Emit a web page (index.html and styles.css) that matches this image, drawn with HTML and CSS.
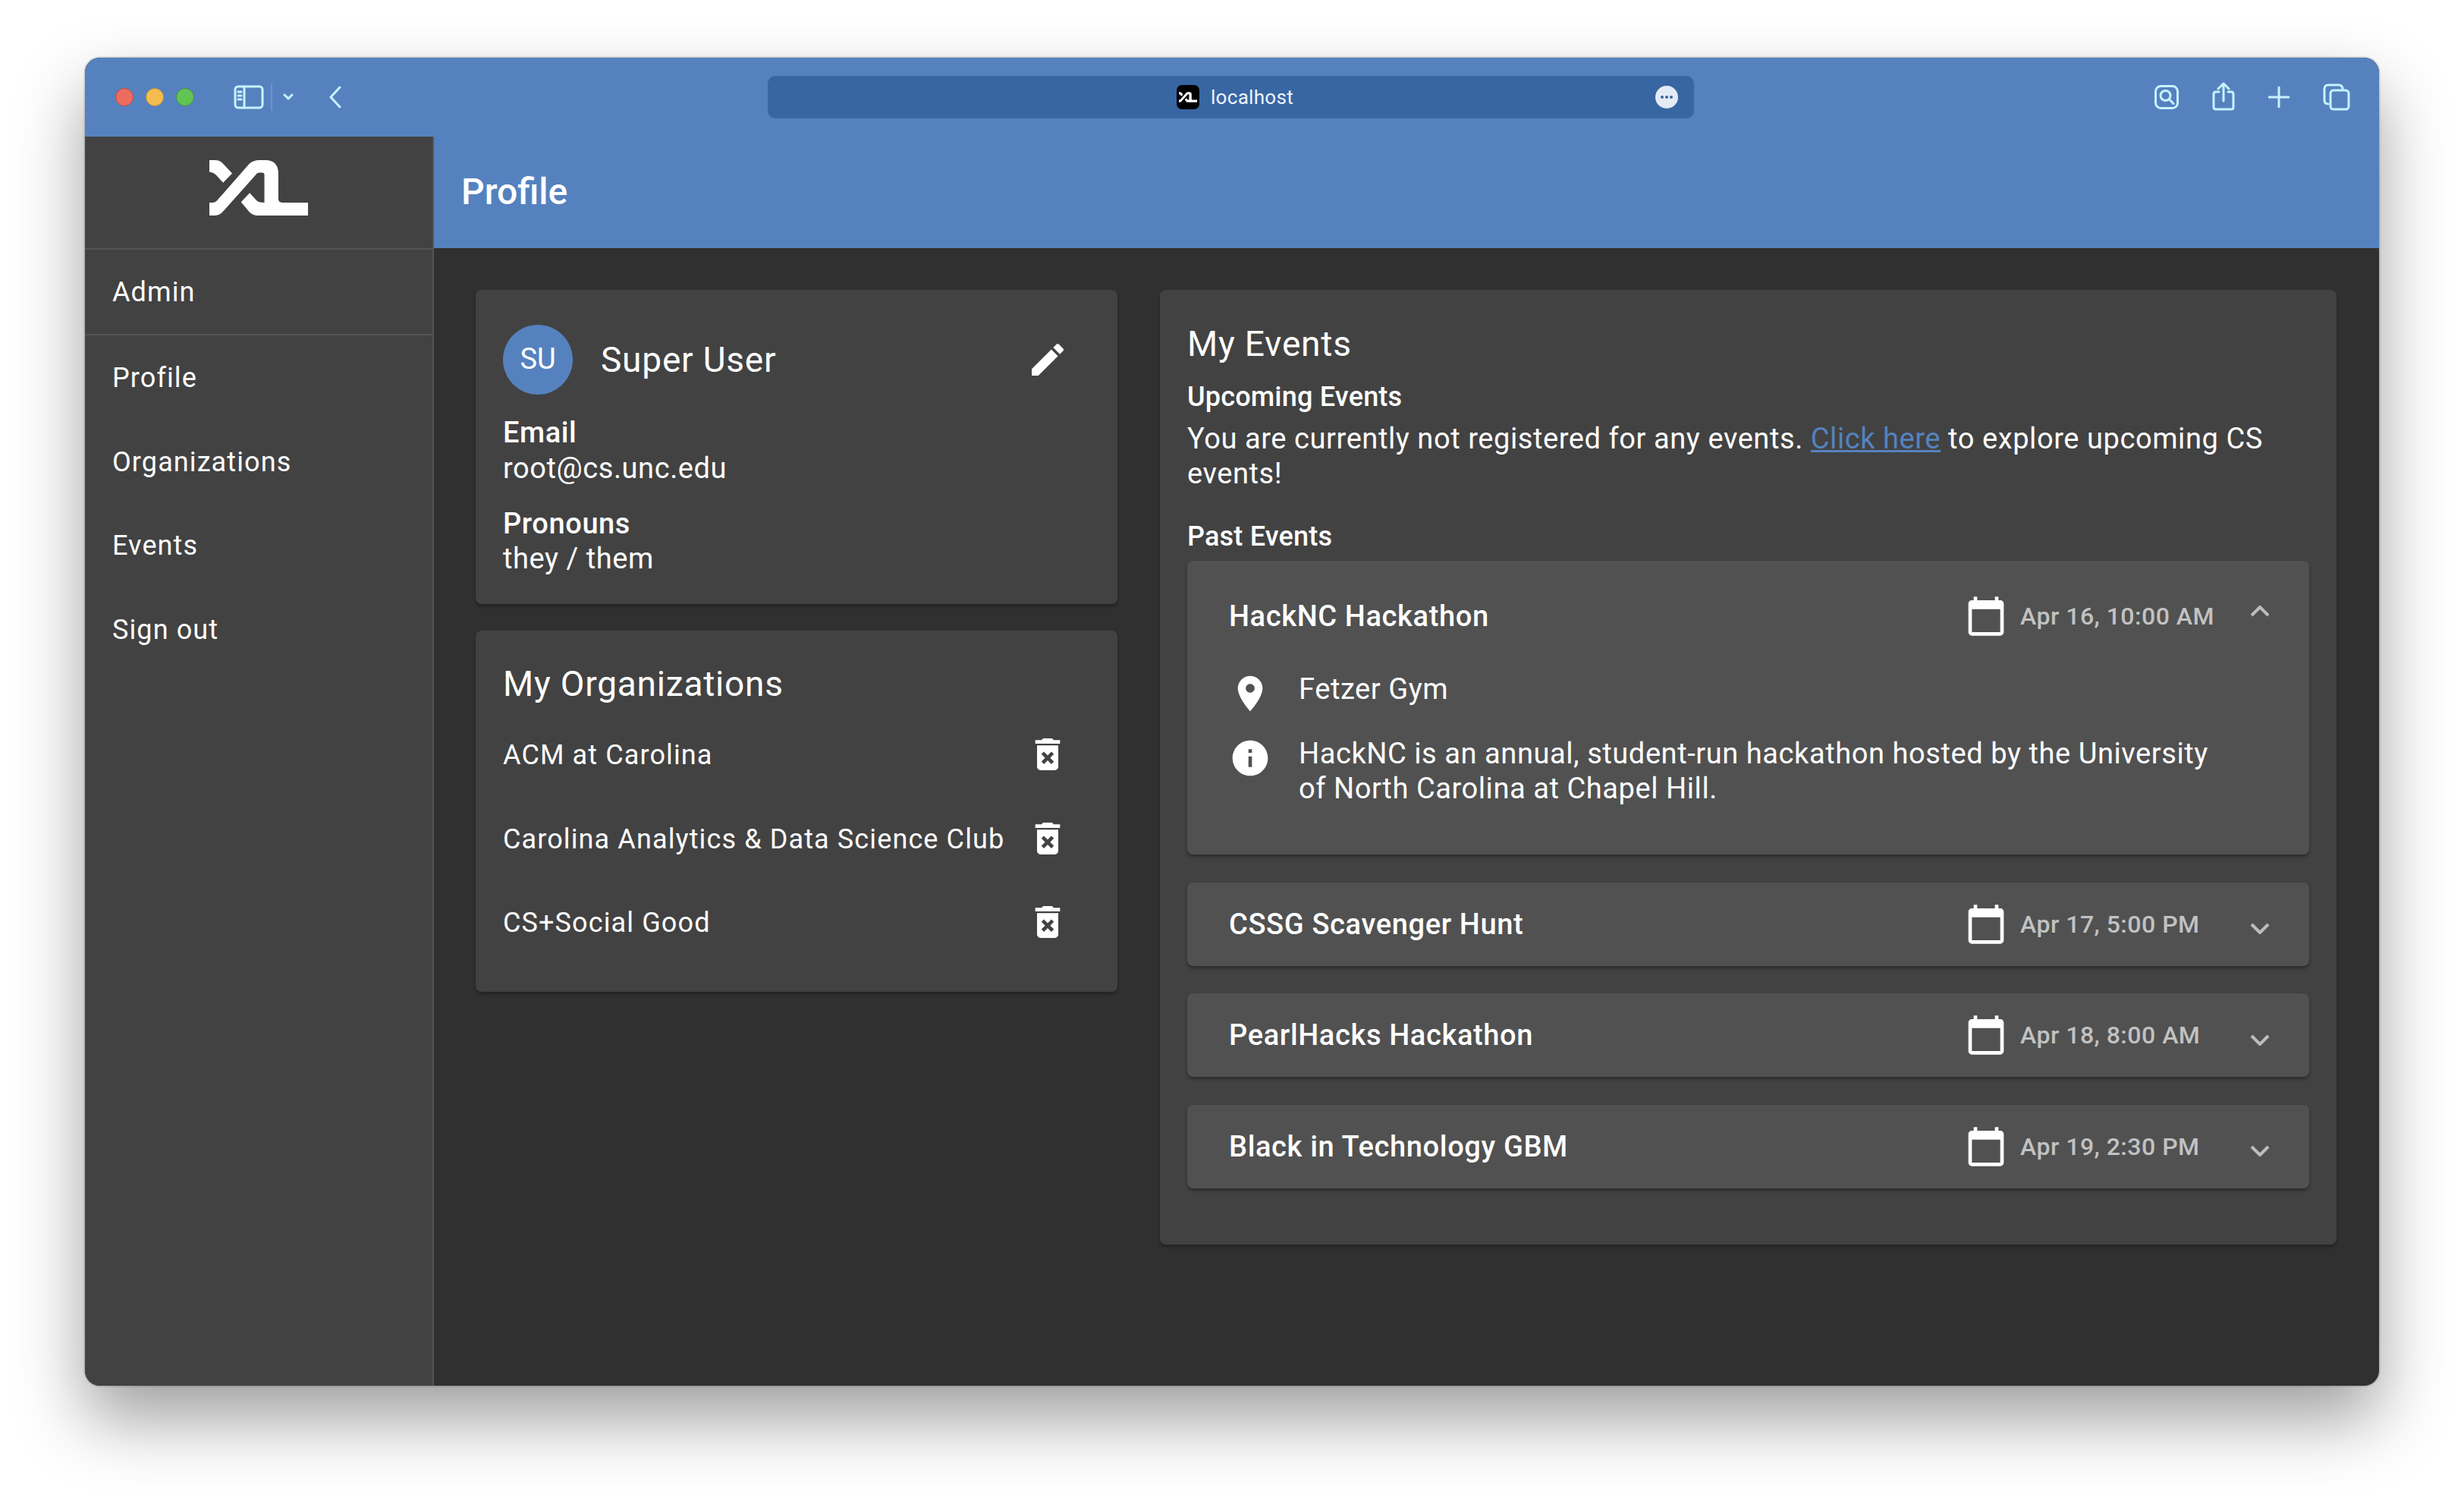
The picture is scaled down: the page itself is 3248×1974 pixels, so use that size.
FILE: index.html
```html
<!DOCTYPE html>
<html lang="en">
<head>
    <meta charset="UTF-8">
    <title>Profile</title>
    <link rel="stylesheet" href="styles.css">
</head>
<body>
    <svg class="defs" width="0" height="0">
        <symbol id="xl" viewBox="48 33 389 218">
            <path d="M48 200H62C70 200 76 196 82 188L205 48C216 37 230 33 245 33H270C302 33 320 52 320 85V185C320 195 325 200 335 200H437V251H240C222 251 210 244 200 230L173 198L207 162L235 193C243 199 252 200 265 200V90C265 84 261 82 255 82H245C238 82 234 87 230 92L105 232C93 246 84 251 70 251H48Z"/>
            <path d="M48 33H70C83 33 92 37 100 45L138 85L102 122L75 92C66 84 58 80 48 80Z"/>
        </symbol>
        <symbol id="calendar" viewBox="0 0 24 24">
            <path d="M20 3h-1V1h-2v2H7V1H5v2H4c-1.1 0-2 .9-2 2v16c0 1.1.9 2 2 2h16c1.1 0 2-.9 2-2V5c0-1.1-.9-2-2-2zm0 18H4V8h16v13z"/>
        </symbol>
        <symbol id="trash" viewBox="0 0 24 24">
            <path d="M6 19c0 1.1.9 2 2 2h8c1.1 0 2-.9 2-2V7H6v12zm2.46-7.12l1.41-1.41L12 12.59l2.12-2.12 1.41 1.41L13.41 14l2.12 2.12-1.41 1.41L12 15.41l-2.12 2.12-1.41-1.41L10.59 14l-2.13-2.12zM15.5 4l-1-1h-5l-1 1H5v2h14V4z"/>
        </symbol>
    </svg>

    <div class="window">
        <div class="titlebar">
            <div class="toolbar-left">
                <span class="light red"></span>
                <span class="light yellow"></span>
                <span class="light green"></span>
                <svg class="tool sidebar-toggle" width="40" height="32" viewBox="0 0 40 32">
                    <rect x="2" y="2" width="36" height="28" rx="4"/>
                    <path d="M14 2V30M6 9H10M6 14H10M6 19H10"/>
                </svg>
                <span class="tool-sep"></span>
                <svg class="tool toggle-arrow" width="14" height="10" viewBox="0 0 14 10">
                    <path d="M2 2L7 7L12 2"/>
                </svg>
                <svg class="tool back-arrow" width="18" height="30" viewBox="0 0 18 30">
                    <path d="M15 2L3 15L15 28"/>
                </svg>
            </div>
            <div class="urlbar">
                <span class="favicon"><svg width="24" height="14"><use href="#xl"/></svg></span>
                <span class="url-text">localhost</span>
                <span class="url-more"><i></i><i></i><i></i></span>
            </div>
            <div class="toolbar-right">
                <svg class="tool" width="32" height="32" viewBox="0 0 32 32">
                    <rect x="1.5" y="1.5" width="29" height="29" rx="7"/>
                    <circle cx="14.5" cy="14" r="6.5"/>
                    <path d="M19.5 19L25 24.5"/>
                </svg>
                <svg class="tool share-icon" width="30" height="38" viewBox="0 0 30 38">
                    <path d="M9 13H5C3 13 2 14 2 16V33C2 35 3 36 5 36H25C27 36 28 35 28 33V16C28 14 27 13 25 13H21"/>
                    <path d="M15 25V3M8 9L15 2L22 9"/>
                </svg>
                <svg class="tool" width="28" height="28" viewBox="0 0 28 28">
                    <path d="M14 1V27M1 14H27"/>
                </svg>
                <svg class="tool" width="36" height="36" viewBox="0 0 36 36">
                    <path d="M7 27C3 27 2 25 2 22V7C2 4 4 2 7 2H21C24 2 26 4 26 8"/>
                    <rect x="10" y="9" width="24" height="25" rx="4"/>
                </svg>
            </div>
        </div>

        <div class="app">
            <aside class="sidebar">
                <div class="brand"><svg width="130" height="73"><use href="#xl"/></svg></div>
                <a class="nav-item nav-admin">Admin</a>
                <a class="nav-item">Profile</a>
                <a class="nav-item">Organizations</a>
                <a class="nav-item">Events</a>
                <a class="nav-item">Sign out</a>
            </aside>

            <div class="main">
                <header class="page-header">Profile</header>
                <div class="content">
                    <div class="left-col">
                        <section class="card profile-card">
                            <div class="profile-top">
                                <span class="avatar">SU</span>
                                <span class="profile-name">Super User</span>
                                <svg class="icon edit-icon" viewBox="0 0 24 24">
                                    <path d="M3 17.25V21h3.75L17.81 9.94l-3.75-3.75L3 17.25zM20.71 7.04c.39-.39.39-1.02 0-1.41l-2.34-2.34c-.39-.39-1.02-.39-1.41 0l-1.83 1.83 3.75 3.75 1.83-1.83z"/>
                                </svg>
                            </div>
                            <div class="field">
                                <strong>Email</strong>
                                <span>root@cs.unc.edu</span>
                            </div>
                            <div class="field">
                                <strong>Pronouns</strong>
                                <span>they / them</span>
                            </div>
                        </section>

                        <section class="card orgs-card">
                            <h2 class="card-title">My Organizations</h2>
                            <div class="org-row">
                                <span>ACM at Carolina</span>
                                <svg class="icon"><use href="#trash"/></svg>
                            </div>
                            <div class="org-row">
                                <span>Carolina Analytics &amp; Data Science Club</span>
                                <svg class="icon"><use href="#trash"/></svg>
                            </div>
                            <div class="org-row">
                                <span>CS+Social Good</span>
                                <svg class="icon"><use href="#trash"/></svg>
                            </div>
                        </section>
                    </div>

                    <section class="card events-card">
                        <h2 class="card-title">My Events</h2>
                        <h3 class="sub-title upcoming">Upcoming Events</h3>
                        <p class="events-note">You are currently not registered for any events. <a class="link">Click here</a> to explore upcoming CS events!</p>
                        <h3 class="sub-title past">Past Events</h3>

                        <div class="panel open">
                            <div class="panel-head">
                                <span class="panel-title">HackNC Hackathon</span>
                                <svg class="icon"><use href="#calendar"/></svg>
                                <span class="panel-date">Apr 16, 10:00 AM</span>
                                <svg class="chevron" width="26" height="15" viewBox="0 0 26 15"><path d="M2 13L13 2L24 13"/></svg>
                            </div>
                            <div class="panel-body">
                                <div class="detail-row">
                                    <svg class="icon" viewBox="0 0 24 24"><path d="M12 2C8.13 2 5 5.13 5 9c0 5.25 7 13 7 13s7-7.75 7-13c0-3.87-3.13-7-7-7zm0 9.5c-1.38 0-2.5-1.12-2.5-2.5s1.12-2.5 2.5-2.5 2.5 1.12 2.5 2.5-1.12 2.5-2.5 2.5z"/></svg>
                                    <span>Fetzer Gym</span>
                                </div>
                                <div class="detail-row">
                                    <svg class="icon" viewBox="0 0 24 24"><path d="M12 2C6.48 2 2 6.48 2 12s4.48 10 10 10 10-4.48 10-10S17.52 2 12 2zm1 15h-2v-6h2v6zm0-8h-2V7h2v2z"/></svg>
                                    <span>HackNC is an annual, student-run hackathon hosted by the University of North Carolina at Chapel Hill.</span>
                                </div>
                            </div>
                        </div>

                        <div class="panel">
                            <div class="panel-head">
                                <span class="panel-title">CSSG Scavenger Hunt</span>
                                <svg class="icon"><use href="#calendar"/></svg>
                                <span class="panel-date">Apr 17, 5:00 PM</span>
                                <svg class="chevron" width="26" height="15" viewBox="0 0 26 15"><path d="M2 2L13 13L24 2"/></svg>
                            </div>
                        </div>

                        <div class="panel">
                            <div class="panel-head">
                                <span class="panel-title">PearlHacks Hackathon</span>
                                <svg class="icon"><use href="#calendar"/></svg>
                                <span class="panel-date">Apr 18, 8:00 AM</span>
                                <svg class="chevron" width="26" height="15" viewBox="0 0 26 15"><path d="M2 2L13 13L24 2"/></svg>
                            </div>
                        </div>

                        <div class="panel">
                            <div class="panel-head">
                                <span class="panel-title">Black in Technology GBM</span>
                                <svg class="icon"><use href="#calendar"/></svg>
                                <span class="panel-date">Apr 19, 2:30 PM</span>
                                <svg class="chevron" width="26" height="15" viewBox="0 0 26 15"><path d="M2 2L13 13L24 2"/></svg>
                            </div>
                        </div>
                    </section>
                </div>
            </div>
        </div>
    </div>
</body>
</html>
```

FILE: styles.css
```css
* {
    margin: 0;
    padding: 0;
    box-sizing: border-box;
}

body {
    width: 3248px;
    height: 1974px;
    padding: 76px 0 0 112px;
    overflow: hidden;
    background: #fff;
    color: #fff;
    font-family: Roboto, "Liberation Sans", sans-serif;
    font-size: 38px;
    line-height: 46px;
    letter-spacing: 0.58px;
}

.defs {
    position: absolute;
}

svg {
    fill: #fff;
    display: block;
}

.window {
    width: 3024px;
    height: 1750px;
    border-radius: 20px;
    overflow: hidden;
    display: flex;
    flex-direction: column;
    background: #303030;
    box-shadow: 0 44px 90px rgba(0, 0, 0, 0.38), 0 0 3px rgba(0, 0, 0, 0.45);
}

/* browser chrome */
.titlebar {
    height: 104px;
    flex: none;
    display: flex;
    align-items: flex-start;
    background: #5582bf;
}

.toolbar-left {
    width: 900px;
    height: 104px;
    padding-left: 40px;
    display: flex;
    align-items: center;
}

.light {
    width: 24px;
    height: 24px;
    border-radius: 50%;
    margin-right: 16px;
}

.red {
    background: #ee6b5f;
    border: 1px solid #b2514b;
}

.yellow {
    background: #f5bd4f;
    border: 1px solid #b98f3d;
}

.green {
    background: #61c454;
    border: 1px solid #4a8f45;
}

.tool {
    fill: none;
    stroke: #c9f1ff;
    stroke-width: 3;
    stroke-linecap: round;
    stroke-linejoin: round;
}

.sidebar-toggle {
    margin-left: 36px;
}

.tool-sep {
    width: 2px;
    height: 36px;
    margin: 0 14px 0 9px;
    background: #6b93ca;
}

.back-arrow {
    margin-left: 46px;
}

.urlbar {
    width: 1221px;
    height: 56px;
    margin-top: 24px;
    border-radius: 10px;
    background: #3866a3;
    display: flex;
    align-items: center;
    padding-left: 539px;
}

.favicon {
    width: 30px;
    height: 32px;
    border-radius: 7px;
    background: #000;
    display: flex;
    align-items: center;
    justify-content: center;
}

.url-text {
    margin-left: 15px;
    font-size: 26px;
    letter-spacing: 0.3px;
    color: #eef3fa;
}

.url-more {
    width: 30px;
    height: 30px;
    margin-left: 477px;
    border-radius: 50%;
    background: #e4ebf5;
    display: flex;
    align-items: center;
    justify-content: center;
    gap: 2px;
}

.url-more i {
    width: 4px;
    height: 4px;
    border-radius: 50%;
    background: #3866a3;
}

.toolbar-right {
    flex: 1;
    height: 104px;
    padding: 0 38px 0 0;
    display: flex;
    align-items: center;
    justify-content: flex-end;
    gap: 44px;
}

.share-icon {
    margin-top: -2px;
}

/* app shell */
.app {
    flex: 1;
    display: flex;
    min-height: 0;
}

.sidebar {
    width: 460px;
    flex: none;
    background: #424242;
    border-right: 2px solid #545454;
}

.brand {
    height: 149px;
    border-bottom: 2px solid #545454;
    display: flex;
    align-items: center;
    justify-content: center;
    padding-bottom: 12px;
}

.nav-item {
    display: block;
    height: 110.5px;
    padding-left: 36px;
    font-size: 36px;
    line-height: 112px;
    letter-spacing: 1.1px;
}

.nav-admin {
    height: 113px;
    border-bottom: 2px solid #545454;
}

.main {
    flex: 1;
    min-width: 0;
}

.page-header {
    height: 147px;
    padding-left: 36px;
    background: #5582bf;
    font-size: 48px;
    font-weight: 500;
    line-height: 146px;
    letter-spacing: 0;
}

.content {
    padding: 55px 55px 0;
    display: flex;
    align-items: flex-start;
    gap: 56px;
}

.left-col {
    width: 846px;
    flex: none;
    display: flex;
    flex-direction: column;
    gap: 35px;
}

.card {
    padding: 0 36px;
    background: #424242;
    border-radius: 8px;
    box-shadow: 0 3px 4px rgba(0, 0, 0, 0.3);
}

.icon {
    width: 56px;
    height: 56px;
    flex: none;
}

.card-title {
    font-size: 46px;
    font-weight: 400;
    line-height: 60px;
    letter-spacing: 0.8px;
}

/* profile */
.profile-card {
    padding-top: 46px;
    padding-bottom: 35px;
}

.profile-top {
    display: flex;
    align-items: center;
    height: 92px;
    margin-bottom: 27px;
}

.avatar {
    width: 92px;
    height: 92px;
    border-radius: 50%;
    background: #5582bf;
    text-align: center;
    line-height: 90px;
    letter-spacing: 0;
}

.profile-name {
    flex: 1;
    margin-left: 37px;
    font-size: 46px;
    letter-spacing: 0.8px;
}

.edit-icon {
    margin-right: 28px;
}

.field {
    display: flex;
    flex-direction: column;
    margin-bottom: 26px;
    line-height: 47px;
}

.field:last-child {
    margin-bottom: 0;
    padding-bottom: 2px;
    line-height: 46px;
}

.field strong {
    font-weight: 500;
}

/* organizations */
.orgs-card {
    padding-top: 40px;
    padding-bottom: 36px;
}

.orgs-card .card-title {
    margin-bottom: 8px;
}

.org-row {
    height: 110.5px;
    padding-right: 28px;
    display: flex;
    align-items: center;
    justify-content: space-between;
    font-size: 36px;
    letter-spacing: 1.12px;
}

.org-row span {
    padding-top: 2px;
}

/* events */
.events-card {
    width: 1551px;
    flex: none;
    padding-top: 41px;
    padding-bottom: 74px;
}

.sub-title {
    font-size: 36px;
    font-weight: 500;
    letter-spacing: 0.2px;
}

.upcoming {
    margin-top: 17px;
}

.events-note {
    margin-top: 9px;
}

.past {
    margin-top: 37px;
    margin-bottom: 9px;
}

.link {
    color: #5582bf;
    text-decoration: underline;
}

.panel {
    margin-bottom: 36.5px;
    background: #515151;
    border-radius: 8px;
    box-shadow: 0 3px 4px rgba(0, 0, 0, 0.35);
}

.panel:last-child {
    margin-bottom: 0;
}

.panel-head {
    height: 110px;
    padding: 0 52px 0 55px;
    display: flex;
    align-items: center;
}

.open .panel-head {
    height: 146px;
}

.panel-title {
    flex: 1;
    font-size: 38px;
    font-weight: 500;
    letter-spacing: 0.65px;
}

.panel-date {
    width: 303px;
    margin-left: 17px;
    font-size: 32px;
    font-weight: 500;
    letter-spacing: 0.5px;
    color: #c2c2c2;
}

.chevron {
    margin-top: 12px;
    fill: none;
    stroke: #bdbdbd;
    stroke-width: 4;
}

.open .chevron {
    margin-top: -14px;
}

.panel-body {
    padding: 0 115px 64px 55px;
    display: flex;
    flex-direction: column;
    gap: 28px;
}

.detail-row {
    display: flex;
    gap: 36px;
}

.detail-row .icon {
    margin-top: 1px;
}
```
